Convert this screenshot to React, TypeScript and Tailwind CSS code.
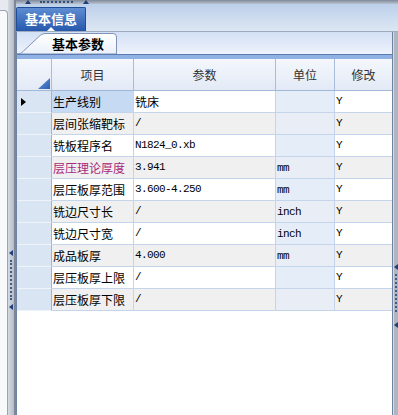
import React from "react";

const cjk = "font-['Noto_Sans_CJK_SC','Noto_Sans',sans-serif]";
const mono = "font-['Liberation_Mono','Noto_Sans_CJK_SC',monospace]";

const rows = [
  { name: "生产线别", value: "铣床", unit: "", edit: "Y" },
  { name: "层间张缩靶标", value: "/", unit: "", edit: "Y" },
  { name: "铣板程序名", value: "N1824_0.xb", unit: "", edit: "Y" },
  { name: "层压理论厚度", value: "3.941", unit: "mm", edit: "Y", pink: true },
  { name: "层压板厚范围", value: "3.600-4.250", unit: "mm", edit: "Y" },
  { name: "铣边尺寸长", value: "/", unit: "inch", edit: "Y" },
  { name: "铣边尺寸宽", value: "/", unit: "inch", edit: "Y" },
  { name: "成品板厚", value: "4.000", unit: "mm", edit: "Y" },
  { name: "层压板厚上限", value: "/", unit: "", edit: "Y" },
  { name: "层压板厚下限", value: "/", unit: "", edit: "Y" },
];

const hasCjk = (s: string) => /[\u4e00-\u9fff]/.test(s);

const ArrowLeft = () => (
  <div className="h-0 w-0 border-y-[3px] border-r-[4px] border-y-transparent border-r-[#1f3f7a]" />
);

const ArrowUp = () => (
  <div className="h-0 w-0 border-x-[3px] border-b-[4px] border-x-transparent border-b-[#1f3f7a]" />
);

const App = () => {
  return (
    <div className={`flex h-[415px] w-[398px] overflow-hidden bg-[#e4e8ee] ${cjk}`}>
      {/* left docked panel + splitter */}
      <div className="flex w-[16px] shrink-0">
        <div className="flex w-[8px] flex-col bg-[#e6eaf0]">
          <div className="mt-[10px] flex-1 rounded-tr-[4px] border-r border-t border-[#9aa3b0] bg-[#f8f9fb]" />
        </div>
        <div className="flex w-[6px] flex-col items-center bg-gradient-to-r from-[#d6dbe2] to-[#b3bcc8] pt-[250px]">
          <ArrowLeft />
          <div className="mt-[4px] h-[40px] border-l-2 border-dotted border-[#3b5b8c]" />
          <div className="mt-[4px]">
            <ArrowLeft />
          </div>
        </div>
        <div className="w-[2px] bg-[#7d8797]" />
      </div>

      <div className="flex w-[382px] flex-col">
        {/* top tab strip */}
        <div className="flex h-[32px] flex-col">
          <div className="flex h-[4px] items-end bg-gradient-to-b from-[#7f8a9a] to-[#b9c2ce]">
            <div className="ml-[9px]">
              <ArrowUp />
            </div>
            <div className="mb-[1px] ml-[9px] w-[33px] border-t-2 border-dotted border-[#2f4f82]" />
            <div className="ml-[10px]">
              <ArrowUp />
            </div>
          </div>
          <div className="flex h-[27px] bg-gradient-to-b from-[#bcd0ea] to-[#dde7f4]">
            <div className="mt-[3px] flex h-[24px] w-[70px] flex-col items-center rounded-t-[2px] border border-b-0 border-[#1f4d99] bg-gradient-to-b from-[#5f8dd3] to-[#2658ac]">
              <span className="mt-[3px] text-[13px] font-bold leading-[16px] text-white">基本信息</span>
              <div className="mt-auto h-0 w-0 border-x-[4px] border-b-[4px] border-x-transparent border-b-white" />
            </div>
          </div>
          <div className="h-[1px] bg-[#9eacbf]" />
        </div>

        <div className="flex flex-1">
          {/* main panel */}
          <div className="flex w-[377px] flex-col border-x border-[#6f83a3] bg-white">
            <div className="relative flex h-[22px] bg-gradient-to-b from-[#d3e0f5] to-[#eef3fc]">
              <svg className="absolute left-0 top-0" width="102" height="22" viewBox="0 0 102 22">
                <defs>
                  <linearGradient id="tabg" x1="0" y1="0" x2="0" y2="1">
                    <stop offset="0" stopColor="#ffffff" />
                    <stop offset="1" stopColor="#eaf0fa" />
                  </linearGradient>
                </defs>
                <path
                  d="M0 22 C3 22 4.5 21 6.5 19 L22 4.5 C24 2.5 26 1.5 29 1.5 L96 1.5 Q99.5 1.5 99.5 5 L99.5 22 Z"
                  fill="url(#tabg)"
                  stroke="#7f93b6"
                  strokeWidth="1"
                />
              </svg>
              <span className="relative ml-[35px] mt-[4px] text-[13px] font-bold leading-[16px] text-black">基本参数</span>
            </div>
            <div className="h-[1px] bg-[#5b7db3]" />
            <div className="h-[4px] bg-[#8fb1e3]" />

            {/* header */}
            <div className="flex h-[32px] border-b border-[#a3b7d6] bg-gradient-to-b from-[#f4f7fc] to-[#e3eaf6] text-[12px] text-[#333]">
              <div className="flex w-[35px] items-end justify-end border-r border-[#a9bcd9] pb-[1px] pr-[1px]">
                <svg width="12" height="11" viewBox="0 0 12 11">
                  <defs>
                    <linearGradient id="cg" x1="0" y1="0" x2="1" y2="1">
                      <stop offset="0" stopColor="#6d98d8" />
                      <stop offset="1" stopColor="#2c5fb0" />
                    </linearGradient>
                  </defs>
                  <polygon points="12,0 12,11 0,11" fill="url(#cg)" />
                </svg>
              </div>
              <div className="flex w-[82px] items-center justify-center border-r border-[#a9bcd9]">项目</div>
              <div className="flex w-[142px] items-center justify-center border-r border-[#a9bcd9]">参数</div>
              <div className="flex w-[59px] items-center justify-center border-r border-[#a9bcd9]">单位</div>
              <div className="flex w-[57px] items-center justify-center">修改</div>
            </div>

            {/* rows */}
            {rows.map((r, i) => {
              const gray = i % 2 === 1;
              const rowBg = gray ? "bg-[#f0f0f0]" : "bg-white";
              return (
                <div key={r.name} className="flex h-[22px] text-[12px] leading-[21px] text-black">
                  <div className="flex w-[35px] items-center border-b border-r border-b-[#eef3fa] border-r-[#9fb3d3] bg-[#dae5f4] pl-[4px]">
                    {i === 0 && (
                      <div className="h-0 w-0 border-y-[4px] border-l-[5px] border-y-transparent border-l-black" />
                    )}
                  </div>
                  <div
                    className={`w-[82px] border-b border-r border-[#c4d4eb] pl-[1px] ${
                      i === 0 ? "bg-[#c6daf3]" : rowBg
                    } ${r.pink ? "text-[#a8287a]" : ""}`}
                  >
                    {r.name}
                  </div>
                  <div
                    className={`w-[142px] border-b border-r border-[#c4d4eb] pl-[1px] ${rowBg} ${
                      hasCjk(r.value) ? "" : `${mono} text-[11px] tracking-[-0.6px]`
                    }`}
                  >
                    {r.value}
                  </div>
                  <div
                    className={`w-[59px] border-b border-r border-[#c4d4eb] pl-[1px] pt-[1px] ${mono} text-[11px] tracking-[-0.6px] ${
                      gray ? "bg-[#e9eef6]" : "bg-[#e5edf9]"
                    }`}
                  >
                    {r.unit}
                  </div>
                  <div className={`w-[57px] border-b border-[#c4d4eb] pl-[1px] ${mono} text-[11px] ${rowBg}`}>
                    {r.edit}
                  </div>
                </div>
              );
            })}
            <div className="flex-1 bg-white" />
          </div>

          {/* right splitter */}
          <div className="flex w-[5px] flex-col items-center border-l border-[#d5dae1] bg-[#aeb6c2] pt-[232px]">
            <ArrowLeft />
            <div className="mt-[4px] h-[38px] border-l-2 border-dotted border-[#3b5b8c]" />
            <div className="mt-[10px]">
              <ArrowLeft />
            </div>
          </div>
        </div>
      </div>
    </div>
  );
};

export default App;
